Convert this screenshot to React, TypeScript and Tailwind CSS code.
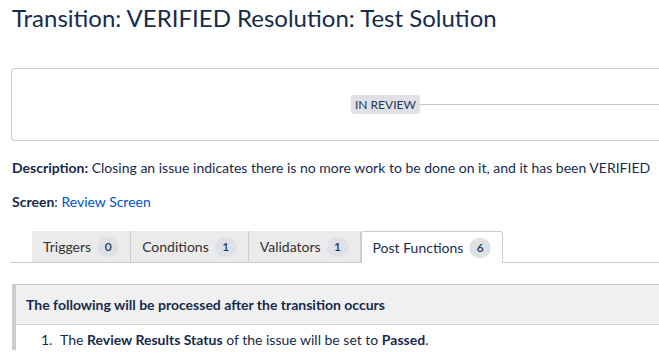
const TABS = [
  { id: "triggers", label: "Triggers", count: 0 },
  { id: "conditions", label: "Conditions", count: 1 },
  { id: "validators", label: "Validators", count: 1 },
  { id: "post-functions", label: "Post Functions", count: 6, active: true },
];

export default function App() {
  return (
    <div className="h-[354px] w-[659px] overflow-hidden bg-white font-['Lato',sans-serif] text-[#172b4d]">
      <h1 className="px-3 pt-[3px] text-[24px] leading-[30px] font-normal">
        Transition: VERIFIED Resolution: Test Solution
      </h1>

      <div className="mt-[35px] ml-[11px] flex h-[73px] items-center rounded-l-[4px] border border-r-0 border-[#cccccc] pl-[339px]">
        <span className="rounded-[3px] bg-[#dfe1e6] px-[4px] text-[12px] leading-[19px] text-[#253858]">
          IN REVIEW
        </span>
        <div className="h-px flex-1 bg-[#c1c7d0]" />
      </div>

      <p className="mt-[17px] px-3 text-[14px] leading-5 whitespace-nowrap">
        <span className="font-bold">Description:</span> Closing an issue
        indicates there is no more work to be done on it, and it has been
        VERIFIED
      </p>
      <p className="mt-[14px] px-3 text-[14px] leading-5">
        <span className="font-bold">Screen</span>:{" "}
        <a className="text-[#0052cc]">Review Screen</a>
      </p>

      <div className="mt-[19px] ml-[10px] flex h-[32px] items-end border-b border-[#cccccc] pl-[22px]">
        {TABS.map(function renderTab(tab) {
          return (
            <div
              key={tab.id}
              className={
                tab.active
                  ? "-mb-px flex h-[32px] items-center gap-[6px] rounded-t-[3px] border border-b-0 border-[#cccccc] bg-white px-[11px] text-[14px]"
                  : "flex h-[31px] items-center gap-[6px] border-r border-[#cccccc] bg-[#ebebeb] px-[11px] text-[14px] text-[#333333]"
              }
            >
              <span>{tab.label}</span>
              <span className="flex h-[20px] min-w-[22px] items-center justify-center rounded-full bg-[#dfe1e6] px-[7px] text-[12px] font-semibold text-[#253858]">
                {tab.count}
              </span>
            </div>
          );
        })}
      </div>

      <div className="mt-[21px] ml-[12px] border-t border-l-[4px] border-[#cccccc]">
        <div className="flex h-[40px] items-center border-b border-[#d6d6d6] bg-[#f0f0f0] px-[10px] text-[14px] font-bold">
          The following will be processed after the transition occurs
        </div>
        <ol className="list-decimal pt-[5px] pl-[40px] text-[14px] leading-5">
          <li className="pl-[4px]">
            The <span className="font-bold">Review Results Status</span> of the
            issue will be set to <span className="font-bold">Passed</span>.
          </li>
        </ol>
      </div>
    </div>
  );
}
